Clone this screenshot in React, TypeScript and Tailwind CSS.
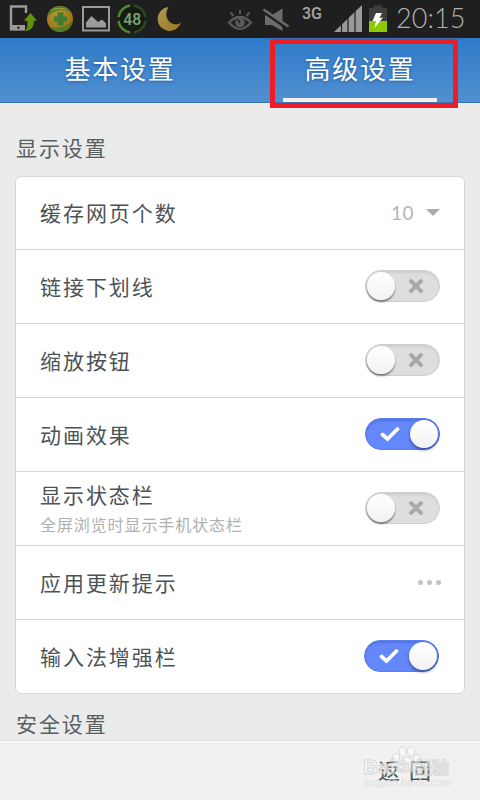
import { ReactNode } from "react";
import clsx from "clsx";

function StatusBar() {
  return (
    <div className="flex h-[38px] shrink-0 items-center bg-[#1f1f1f]">
      <svg width="240" height="38" viewBox="0 0 240 38">
        <defs>
          <radialGradient id="ball" cx="0.4" cy="0.35" r="0.7">
            <stop offset="0" stopColor="#b39a2c" />
            <stop offset="1" stopColor="#9a6a14" />
          </radialGradient>
          <linearGradient id="moon" x1="0" y1="0" x2="1" y2="1">
            <stop offset="0" stopColor="#b09a58" />
            <stop offset="1" stopColor="#98761a" />
          </linearGradient>
        </defs>
        {/* phone with update arrow */}
        <path d="M26 13V6.500H11V29h13" fill="none" stroke="#9b9b9b" strokeWidth="2.400" />
        <path d="M10 25h15v5.500H10z" fill="#9b9b9b" />
        <circle cx="18.500" cy="27.700" r="1.200" fill="#1f1f1f" />
        <path d="M30.500 12.500l7 8.500h-3.200c0 6.500-3.800 10.500-10.300 10.500 3-2.500 3.700-6 3-10.500h-3.500z" fill="#63910f" stroke="#1f1f1f" strokeWidth="0.600" />
        {/* shield ball */}
        <circle cx="60" cy="19" r="13" fill="url(#ball)" />
        <path d="M47.500 16C49 9 54 6 60 6c5 0 9 3 11 6-9-4-16-2-23.500 4zM50 27c9 2 16 0 22.500-6C71 28 66 32 60 32c-4 0-7.500-2-10-5z" fill="#517c22" />
        <path d="M50 11c5-4 13-4 18-1-7-1-12-1-18 1z" fill="#8fa04a" />
        <path d="M57.500 12.500h6v4h3.500v5h-3.500v4h-6v-4H54v-5h3.500z" fill="#3f7b32" />
        {/* picture */}
        <rect x="83" y="7" width="26" height="23.500" fill="none" stroke="#9b9b9b" strokeWidth="2" />
        <path d="M86 27.500v-5l5.500-6.500 6.500 6 4-2.500 4 4v4z" fill="#9b9b9b" />
        {/* battery ring */}
        <circle cx="132" cy="19" r="12" fill="#161b14" />
        <path d="M134 5.500a13.500 13.500 0 0 1 11.500 11.500M145.500 21a13.500 13.500 0 0 1-11.500 11.500" fill="none" stroke="#2b4a1d" strokeWidth="2.500" />
        <path d="M130 32.500a13.500 13.500 0 0 1-11.500-11.500M118.500 17a13.500 13.500 0 0 1 11.500-11.500" fill="none" stroke="#4d8a2b" strokeWidth="2.500" />
        <text x="132.300" y="25" textAnchor="middle" fontSize="16.500" fontFamily="Roboto, sans-serif" fontWeight="500" fill="#7da978" textLength="18" lengthAdjust="spacingAndGlyphs">48</text>
        {/* moon */}
        <path d="M168.500 7A12 12 0 1 0 181 22.500C173.500 28.500 161.500 19 168.500 7z" fill="url(#moon)" />
      </svg>
      <svg width="240" height="38" viewBox="220 0 240 38" className="-ml-5 shrink-0">
        {/* smart stay eye */}
        <path d="M229 22.500q11-11 22 0-11 13-22 0z" fill="none" stroke="#5a5a5a" strokeWidth="2.200" />
        <circle cx="240" cy="22.500" r="4.800" fill="#5a5a5a" />
        <path d="M240 23l-2.500-4" stroke="#1f1f1f" strokeWidth="1.500" />
        <path d="M240 10v4M230.500 12.500l3 3.500M249.500 12.500l-3 3.500" stroke="#5a5a5a" strokeWidth="2" />
        {/* muted speaker */}
        <path d="M265 15h7l10.500-6.500V31L272 25h-7z" fill="#6c6c6c" />
        <path d="M263.500 11l25 17.500" stroke="#1f1f1f" strokeWidth="4.500" />
        <path d="M263.500 9.500l25 17" stroke="#6c6c6c" strokeWidth="2.600" />
        <text x="302" y="18.500" fontSize="16" fontFamily="Roboto, sans-serif" fontWeight="500" fill="#a6a6a6" textLength="20" lengthAdjust="spacingAndGlyphs">3G</text>
        {/* signal */}
        <path d="M334 32L362 5v27z" fill="#9a9a9a" />
        <path d="M341.500 32v-9M348 32V16M355 32V10" stroke="#1f1f1f" strokeWidth="1.200" />
        {/* battery */}
        <path d="M373.500 5.500h9V8h4.500v24h-18V8h4.500z" fill="#3d3d3d" />
        <path d="M369 21h18v11h-18z" fill="#8bcb00" />
        <path d="M376 13h6l-2.500 5 3.500-.5-8.500 10.500 1.500-7h-3.500z" fill="#fff" />
      </svg>
      <span className="-mt-0.5 -ml-[64px] font-['Lato','Liberation_Sans',sans-serif] text-[27px] leading-9 font-light tracking-[0.100px] whitespace-nowrap text-[#b0b0b0]">
        20:15
      </span>
    </div>
  );
}

function Tab({ label, active }: { label: string; active?: boolean }) {
  return (
    <div className="relative flex-1 text-center">
      <span className="block text-[26px] leading-[60px] tracking-[1.800px] text-white [text-shadow:0_1px_3px_rgba(0,40,90,0.450)]">
        {label}
      </span>
      {active && (
        <>
          <div className="absolute top-[60px] left-[43px] h-1 w-[154px] bg-[#f1f1f1]" />
          <div className="absolute top-px left-[30px] h-[69px] w-[188px] border-[5px] border-[#ee1c24]" />
        </>
      )}
    </div>
  );
}

function Toggle({ on }: { on?: boolean }) {
  return (
    <div
      className={clsx(
        "mb-0.5 flex h-8 w-[75px] items-center rounded-full border p-px",
        on
          ? "flex-row-reverse border-[#5b7eec] bg-[#6487fa] shadow-[inset_0_2px_2px_#5175e4]"
          : "border-[#cecece] bg-[#dedede] shadow-[inset_0_2px_2px_#cfcfcf]"
      )}
    >
      <div
        className={clsx(
          "h-7 w-7 shrink-0 rounded-full bg-linear-to-b from-white to-[#f2f2f2]",
          on ? "shadow-[0_2px_3px_rgba(20,40,100,0.600)]" : "shadow-[0_2px_2px_rgba(0,0,0,0.450)]"
        )}
      />
      {on ? (
        <svg width="20" height="16" viewBox="0 0 20 16" className="mr-[10px]">
          <path d="M2.500 8.500l5 4.500 10-10" fill="none" stroke="#fff" strokeWidth="3.700" strokeLinecap="round" />
        </svg>
      ) : (
        <svg width="16" height="16" viewBox="0 0 16 16" className="ml-[13px]">
          <path d="M3 3l10 10M13 3L3 13" fill="none" stroke="#a9a9a9" strokeWidth="4" strokeLinecap="round" />
        </svg>
      )}
    </div>
  );
}

function Row({ label, sub, children }: { label: string; sub?: string; children: ReactNode }) {
  return (
    <div className="flex h-[74px] shrink-0 items-center justify-between px-6 first:h-[73px]">
      <div className={clsx(!sub && "-mt-0.5")}>
        <p className="text-[21px] leading-[30px] tracking-[1.950px] text-[#4b5357]">{label}</p>
        {sub && <p className="text-[16px] leading-[30px] tracking-[0.900px] text-[#b0b0b0]">{sub}</p>}
      </div>
      {children}
    </div>
  );
}

function SectionTitle({ children }: { children: ReactNode }) {
  return <h2 className="pl-4 text-[21px] leading-[30px] tracking-[1.900px] text-[#596064]">{children}</h2>;
}

export default function App() {
  return (
    <div className="flex h-[800px] w-[480px] flex-col overflow-hidden bg-[#ebebeb] font-['Noto_Sans_CJK_SC',sans-serif] font-normal">
      <StatusBar />

      {/* Tabs */}
      <div className="flex h-[65px] shrink-0 border-b border-[#3a74b5] bg-linear-to-b from-[#2e7ac8] to-[#5190d1]">
        <Tab label="基本设置" />
        <Tab label="高级设置" active />
      </div>

      {/* Settings */}
      <div className="h-[637px] shrink-0 pt-[29px]">
        <SectionTitle>显示设置</SectionTitle>
        <div className="mx-[15px] mt-[14px] mb-[14px] flex h-[518px] flex-col divide-y divide-[#d6d6d6] rounded-md border border-[#d6d6d6] bg-white">
          <Row label="缓存网页个数">
            <div className="flex items-center gap-3">
              <span className="font-['Lato',sans-serif] text-[19px] tracking-[0.500px] text-[#b4b4b4]">10</span>
              <div className="-mt-0.5 h-0 w-0 border-x-[7px] border-t-[7px] border-x-transparent border-t-[#acacac]" />
            </div>
          </Row>
          <Row label="链接下划线">
            <Toggle />
          </Row>
          <Row label="缩放按钮">
            <Toggle />
          </Row>
          <Row label="动画效果">
            <Toggle on />
          </Row>
          <Row label="显示状态栏" sub="全屏浏览时显示手机状态栏">
            <Toggle />
          </Row>
          <Row label="应用更新提示">
            <div className="-mr-px flex gap-1">
              <i className="h-[5px] w-[5px] rounded-full bg-[#c2c2c2]" />
              <i className="h-[5px] w-[5px] rounded-full bg-[#c2c2c2]" />
              <i className="h-[5px] w-[5px] rounded-full bg-[#c2c2c2]" />
            </div>
          </Row>
          <Row label="输入法增强栏">
            <div className="mr-px">
              <Toggle on />
            </div>
          </Row>
        </div>
        <SectionTitle>安全设置</SectionTitle>
      </div>

      {/* Bottom bar */}
      <div className="relative flex h-[60px] shrink-0 justify-end border-t border-[#dcdcdc] bg-[#f1f1f1] pr-[40px] shadow-[inset_0_1px_0_#fff]">
        <span className="text-[22px] leading-[57px] tracking-[9px] text-[#4b5357]">返回</span>
        <svg className="absolute top-0 left-[360px]" width="110" height="59" viewBox="360 741 110 59">
          <g fill="#fafafa" stroke="#cccccc" strokeWidth="0.900" opacity="0.700">
            <ellipse cx="396" cy="758" rx="3.500" ry="4.500" />
            <ellipse cx="402.500" cy="751.500" rx="3.500" ry="5" />
            <ellipse cx="411" cy="751.500" rx="3.500" ry="5" />
            <ellipse cx="417" cy="759" rx="3.500" ry="4.500" />
            <path d="M406.500 757c4 0 5 4.500 8.500 7 4 3 2 8-2.500 8-3 0-9 0-12 0-4.500 0-6-5-2.500-8s4.500-7 8.500-7z" />
            <g fontFamily="'Liberation Sans','Noto Sans CJK SC',sans-serif" fontWeight="700">
              <text x="363" y="774" fontSize="21">Bai</text>
              <text x="397" y="771" fontSize="14">du</text>
              <text x="415" y="774" fontSize="17">经验</text>
            </g>
          </g>
          <text x="364" y="786" fontSize="11" fontFamily="'Liberation Sans',sans-serif" fill="#e0e0e0" textLength="87">jingyan.baidu.com</text>
        </svg>
      </div>
    </div>
  );
}
